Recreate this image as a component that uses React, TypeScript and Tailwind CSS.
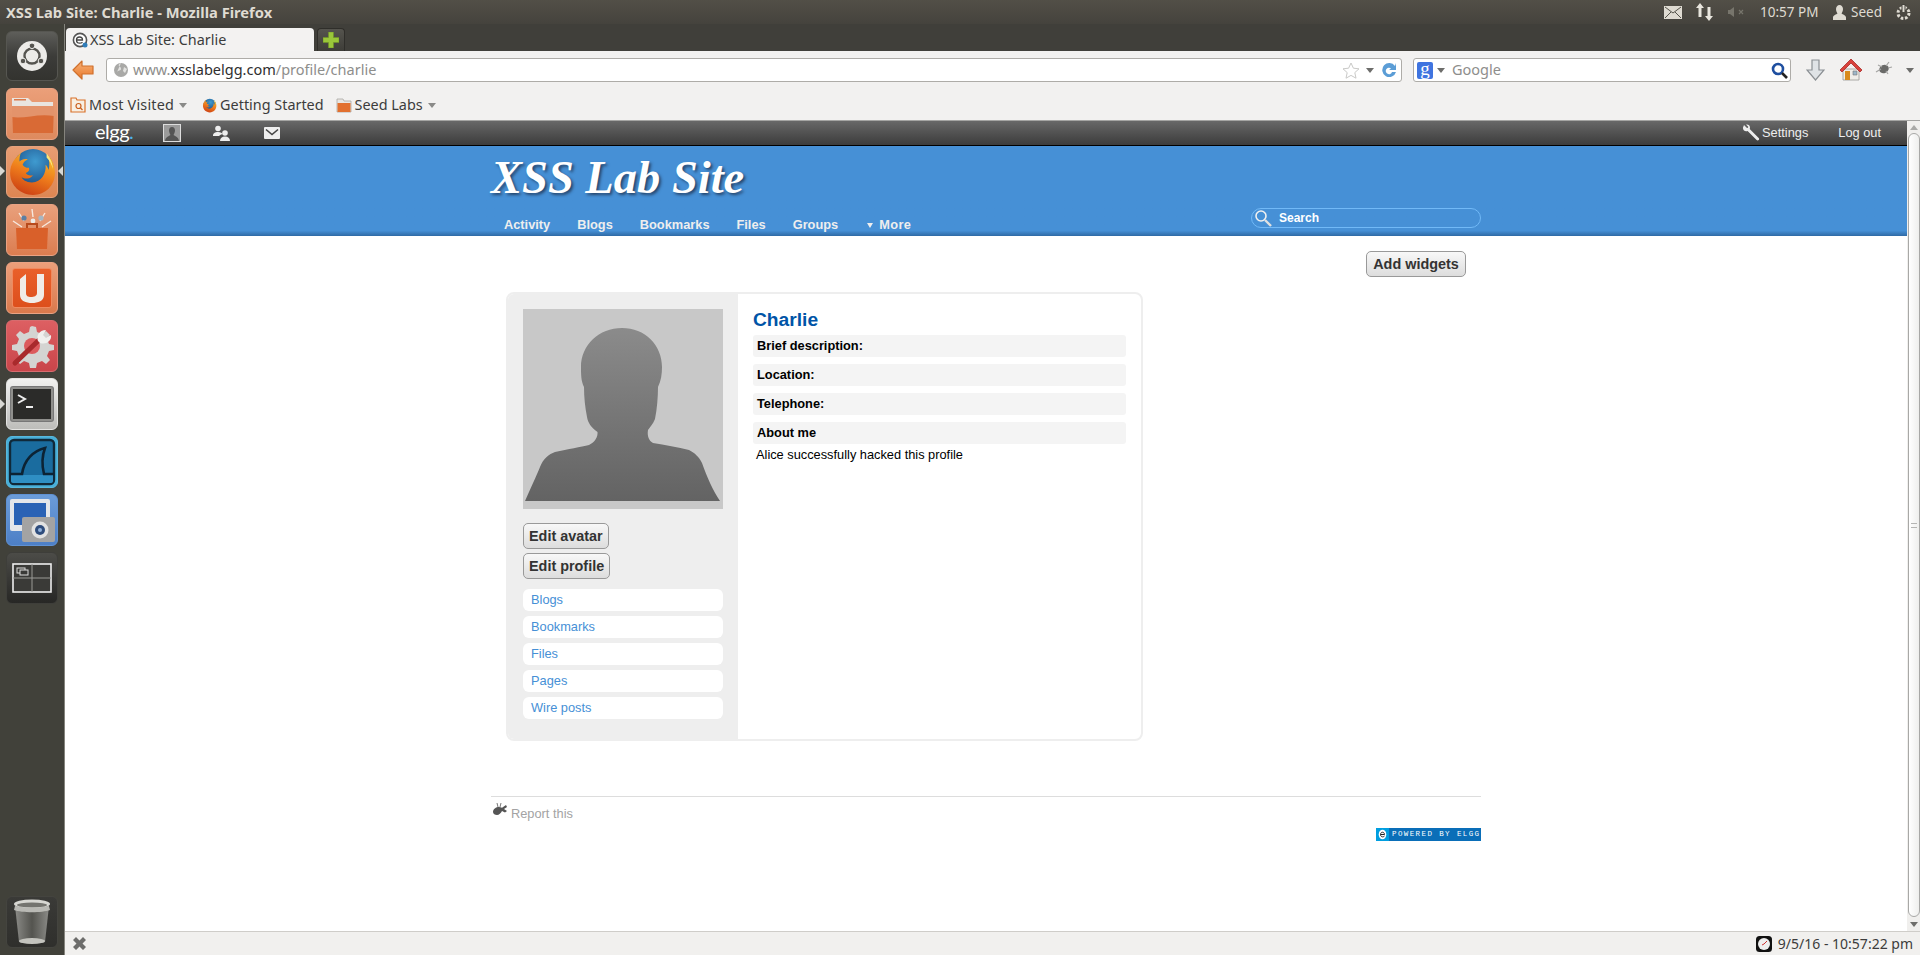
import type { ReactNode } from 'react';

const MENU_ITEMS = ['Blogs', 'Bookmarks', 'Files', 'Pages', 'Wire posts'];
const NAV_ITEMS = ['Activity', 'Blogs', 'Bookmarks', 'Files', 'Groups'];
const PROFILE_ROWS = ['Brief description:', 'Location:', 'Telephone:', 'About me'];

function Caret({ className }: { className: string }) {
  return (
    <svg width="8" height="5" viewBox="0 0 8 5" className={className}>
      <path d="M0 0h8L4 5z" fill="currentColor" />
    </svg>
  );
}

function Tile({ className, children }: { className: string; children: ReactNode }) {
  return (
    <div className={`w-[52px] h-[52px] shrink-0 rounded-[6px] flex items-center justify-center overflow-hidden ${className}`}>
      {children}
    </div>
  );
}

function FirefoxLogo({ size }: { size: number }) {
  return (
    <svg width={size} height={size} viewBox="0 0 48 48">
      <defs>
        <radialGradient id="ffglobe" cx="0.55" cy="0.3" r="0.7">
          <stop offset="0" stopColor="#3f9bd0" />
          <stop offset="1" stopColor="#17457f" />
        </radialGradient>
        <linearGradient id="fffox" x1="0.7" y1="0" x2="0.3" y2="1">
          <stop offset="0" stopColor="#f7c22c" />
          <stop offset="0.5" stopColor="#ef7d1c" />
          <stop offset="1" stopColor="#cb3f14" />
        </linearGradient>
      </defs>
      <circle cx="25" cy="22" r="20" fill="url(#ffglobe)" />
      <path d="M14 5C8 10 3 16 3 25c0 12 10 21 22 21 12 0 21-9 21-21 0-7-3-14-7-17 2 5 2 10 1 14-1-3-2-4-3-5 1 8-4 17-13 17-6 0-9-3-10-5 3 2 8 2 11-2-3 1-6 0-7-2 3-1 4-3 3-5-3 0-5-1-6-3 1-3 3-4 5-5-3-1-6 0-8 2 0-3 0-6 2-10z" fill="url(#fffox)" />
      <path d="M38 6c3 4 6 9 6 15-1-4-3-8-6-11z" fill="#fbe37b" />
    </svg>
  );
}

function Launcher() {
  return (
    <aside className="w-[65px] shrink-0 border-r border-[#85847d] bg-[#41413a] flex flex-col items-center pt-[7px] pr-px relative">
      <Tile className="h-[50px]! bg-linear-to-b from-[#5e5e5a] via-[#3c3c39] to-[#33332f] border border-[#565651] mb-[7px]">
        <svg width="32" height="32" viewBox="0 0 32 32">
          <circle cx="16" cy="16" r="15" fill="#ecebe8" />
          <circle cx="16" cy="16" r="7.5" fill="none" stroke="#55544f" strokeWidth="2.4" />
          <circle cx="16" cy="5.8" r="2.8" fill="#55544f" stroke="#ecebe8" strokeWidth="1" />
          <circle cx="7" cy="21" r="2.8" fill="#55544f" stroke="#ecebe8" strokeWidth="1" />
          <circle cx="25" cy="21" r="2.8" fill="#55544f" stroke="#ecebe8" strokeWidth="1" />
        </svg>
      </Tile>
      <div className="flex flex-col gap-[6px]">
        <Tile className="bg-linear-to-b from-[#eb9f79] to-[#de8a5e] border border-[#e9a283]">
          <svg width="46" height="42" viewBox="0 0 46 42">
            <path d="M3 5h16l4 4h21v7H3z" fill="#e9e5e0" />
            <path d="M5 6h12v1.5H5z" fill="#d9794a" />
            <path d="M3 13h42l-1 27H4z" fill="#d96a35" />
            <path d="M3 13h42v10C30 20 15 26 3 24z" fill="#e3936b" />
          </svg>
        </Tile>
        <Tile className="bg-linear-to-b from-[#e89d72] to-[#dd8653] border border-[#e6a27d]">
          <FirefoxLogo size={50} />
        </Tile>
        <Tile className="bg-linear-to-b from-[#e9a07c] to-[#db7d50] border border-[#e9a283]">
          <svg width="46" height="46" viewBox="0 0 46 46">
            <path d="M23 2l1 8M10 6l5 8M36 6l-5 8M4 14l9 6M42 14l-9 6" stroke="#f6e8de" strokeWidth="1.4" />
            <circle cx="15" cy="11" r="2.6" fill="#5c7fa3" />
            <circle cx="24" cy="14" r="2.4" fill="#ecebe8" />
            <circle cx="32" cy="11" r="2.6" fill="#a7b6c2" />
            <path d="M7 21h32l-1 21H8z" fill="#d9602a" />
            <path d="M18 21v-4h10v4" fill="none" stroke="#b84a1c" strokeWidth="2" />
          </svg>
        </Tile>
        <Tile className="bg-linear-to-b from-[#ec9f7a] to-[#d9794c] border border-[#e9a283]">
          <div className="w-[40px] h-[40px] rounded-[3px] border border-[#f08a5f] bg-linear-to-b from-[#e9602a] to-[#dd4f1c] flex items-center justify-center">
            <svg width="26" height="32" viewBox="0 0 26 32">
              <path d="M1 7l6-5v19c0 3 2 4 5 4s6-1 6-4V2h7v21c0 6-6 8-12 8S1 29 1 23z" fill="#f0ece7" />
            </svg>
          </div>
        </Tile>
        <Tile className="bg-linear-to-b from-[#dd5f62] to-[#c9454a] border border-[#d76c6f]">
          <svg width="46" height="46" viewBox="0 0 46 46">
            <path d="M23 3l4 1 1 5 5 2 4-3 4 4-3 4 2 5 5 1v5l-5 1-2 5 3 4-4 4-4-3-5 2-1 5h-6l-1-5-5-2-4 3-4-4 3-4-2-5-5-1v-5l5-1 2-5-3-4 4-4 4 3 5-2 1-5z" fill="#d4d4d2" />
            <circle cx="23" cy="23" r="8" fill="#dc5a5d" />
            <path d="M6 40L30 17" stroke="#a92a2c" strokeWidth="5" strokeLinecap="round" />
            <path d="M29 18c-2-5 1-11 8-11l-3 5 3 3 5-3c1 6-5 10-11 8z" fill="#f0f0ee" />
          </svg>
        </Tile>
        <Tile className="bg-linear-to-b from-[#f2f2f0] to-[#bdbdba] border border-[#e4e4e2]">
          <div className="w-[42px] h-[34px] bg-[#2b2b29] border-[2px] border-[#8f8f8c] rounded-[2px] shadow-[0_0_0_1px_#777]">
            <svg width="38" height="30" viewBox="0 0 38 30">
              <path d="M5 6l7 4-7 4" fill="none" stroke="#eee" strokeWidth="2" />
              <path d="M13 18h7" stroke="#eee" strokeWidth="2" />
            </svg>
          </div>
        </Tile>
        <Tile className="bg-[#47aed8] border border-[#58b8dd]">
          <svg width="48" height="48" viewBox="0 0 48 48">
            <rect x="2" y="2" width="44" height="44" rx="4" fill="#1a6c9f" stroke="#10293a" strokeWidth="2.4" />
            <path d="M3 37h42v6a2 2 0 0 1-2 2H5a2 2 0 0 1-2-2z" fill="#2f8fc4" />
            <path d="M2 36h12c2-14 11-23 23-26-3 8-3 18-1 26h10" fill="none" stroke="#0c2334" strokeWidth="2.6" />
          </svg>
        </Tile>
        <Tile className="bg-linear-to-b from-[#6b9cd9] to-[#4d7fc6] border border-[#5f91d3]">
          <svg width="50" height="48" viewBox="0 0 50 48">
            <rect x="3" y="3" width="40" height="32" rx="2" fill="#e4e6ea" />
            <rect x="7" y="7" width="32" height="22" fill="#2a62b5" />
            <rect x="15" y="21" width="33" height="25" rx="2" fill="#a3a3a3" />
            <circle cx="33" cy="34" r="8.5" fill="#e2e2e2" />
            <circle cx="33" cy="34" r="5" fill="#2f4d7d" />
            <circle cx="33" cy="34" r="2" fill="#8fb0dc" />
          </svg>
        </Tile>
        <Tile className="bg-linear-to-b from-[#4c4c48] to-[#272725] border border-[#3e3e3a]">
          <svg width="40" height="30" viewBox="0 0 40 30">
            <rect x="1" y="1" width="38" height="28" fill="#3a3a37" stroke="#eee" strokeWidth="1.6" />
            <path d="M20 1v28M1 15h38" stroke="#9a9a96" strokeWidth="1" />
            <rect x="5" y="5" width="8" height="5" fill="none" stroke="#ddd" strokeWidth="1" />
            <rect x="8" y="7" width="8" height="5" fill="#3a3a37" stroke="#ddd" strokeWidth="1" />
          </svg>
        </Tile>
      </div>
      <Tile className="mt-auto mb-[7px] bg-linear-to-b from-[#3a3a37] to-[#2f2f2c] border border-[#44443f]">
        <svg width="40" height="48" viewBox="0 0 40 48">
          <defs>
            <linearGradient id="bin" x1="0" y1="0" x2="1" y2="0">
              <stop offset="0" stopColor="#8b8b87" />
              <stop offset="0.5" stopColor="#54544f" />
              <stop offset="1" stopColor="#8b8b87" />
            </linearGradient>
          </defs>
          <path d="M3 8l4 36c4 2 22 2 26 0l4-36z" fill="url(#bin)" />
          <ellipse cx="20" cy="6" rx="18" ry="4.5" fill="#d7d7d2" />
          <ellipse cx="20" cy="7" rx="15" ry="2.5" fill="#74746f" />
          <path d="M2 12c8 3 28 3 36 0l-1-4c-8 2-26 2-34 0z" fill="#b9b9b4" />
          <ellipse cx="20" cy="43" rx="13" ry="3" fill="#c4c4be" />
        </svg>
      </Tile>
      <span className="absolute left-0 top-[142px] w-0 h-0 border-y-[5px] border-y-transparent border-l-[5px] border-l-[#d8d8d3]" />
      <span className="absolute right-[1px] top-[142px] w-0 h-0 border-y-[5px] border-y-transparent border-r-[5px] border-r-[#d8d8d3]" />
      <span className="absolute left-0 top-[375px] w-0 h-0 border-y-[5px] border-y-transparent border-l-[5px] border-l-[#d8d8d3]" />
    </aside>
  );
}

function TitleBar() {
  return (
    <div className="h-[24px] shrink-0 flex items-center justify-between pl-[6px] pr-[8px] bg-linear-to-b from-[#524f47] to-[#45433d] font-['Noto_Sans',sans-serif] text-[#dfdbd2]">
      <span className="text-[14.7px] font-bold">XSS Lab Site: Charlie - Mozilla Firefox</span>
      <div className="flex items-center text-[13.5px]">
        <svg width="18" height="13" viewBox="0 0 18 13" className="mr-[14px]">
          <rect x="0.5" y="0.5" width="17" height="12" fill="#dfdbd2" stroke="#dfdbd2" />
          <path d="M1 1l8 6 8-6M1 12l6-6M17 12l-6-6" fill="none" stroke="#55534b" strokeWidth="1" />
        </svg>
        <svg width="17" height="18" viewBox="0 0 17 18" className="mr-[15px]">
          <path d="M4 0l4 5H5.5v9h-3V5H0zM13 18l4-5h-2.500V4h-3v9H9z" fill="#e8e5dd" />
        </svg>
        <svg width="17" height="10" viewBox="0 0 17 10" className="mr-[15px]">
          <path d="M0 3h2l4-3v10L2 7H0z" fill="#77756c" />
          <path d="M11 3l4 4M15 3l-4 4" stroke="#77756c" strokeWidth="1.2" />
        </svg>
        <span className="mr-[13px] w-[60px] whitespace-nowrap">10:57 PM</span>
        <svg width="13" height="15" viewBox="0 0 13 15" className="mr-[5px]">
          <path d="M6.5 0c2 0 3.500 1.700 3.500 4 0 2-1 3.500-1.500 4.500 1 1 4.500 1.500 4.500 4V15H0v-2.500c0-2.500 3.500-3 4.500-4C4 7.500 3 6 3 4c0-2.300 1.500-4 3.500-4z" fill="#dfdbd2" />
        </svg>
        <span className="mr-[13px]">Seed</span>
        <svg width="17" height="17" viewBox="0 0 17 17">
          <circle cx="8.5" cy="9" r="5.5" fill="none" stroke="#dfdbd2" strokeWidth="3" strokeDasharray="2.6 1.7" />
          <path d="M8.5 0v8" stroke="#45433d" strokeWidth="4" />
          <path d="M8.5 1v7" stroke="#dfdbd2" strokeWidth="2" />
        </svg>
      </div>
    </div>
  );
}

function TabStrip() {
  return (
    <div className="h-[27px] shrink-0 bg-[#403f3a] flex items-end pl-px gap-[3px] font-['Noto_Sans',sans-serif]">
      <div className="w-[248px] h-[23px] rounded-t-[4px] bg-[#f3f2f1] flex items-center pl-[6px] gap-[2px] text-[14.4px] text-[#3c3c3c]">
        <svg width="16" height="16" viewBox="0 0 16 16">
          <circle cx="8" cy="8" r="6.6" fill="#fff" stroke="#555" strokeWidth="1.6" />
          <path d="M4.500 8h6c0-2-1.200-3-3-3s-3 1.300-3 3 1.300 3.200 3.200 3.200c1 0 2-.3 2.800-1" fill="none" stroke="#444" strokeWidth="1.3" />
          <circle cx="13" cy="13" r="2.5" fill="#2f7cb8" />
        </svg>
        <span className="whitespace-nowrap">XSS Lab Site: Charlie</span>
      </div>
      <div className="w-[28px] h-[23px] rounded-t-[4px] bg-linear-to-b from-[#55544e] to-[#3e3d38] border border-b-0 border-[#2f2e2a] flex items-center justify-center">
        <svg width="16" height="16" viewBox="0 0 16 16">
          <path d="M5.500 0h5v5.500H16v5h-5.500V16h-5v-5.500H0v-5h5.500z" fill="#9ac63a" stroke="#6f9524" strokeWidth="0.6" />
        </svg>
      </div>
    </div>
  );
}

function NavBar() {
  return (
    <div className="h-[46px] shrink-0 bg-[#f2f1f0] flex items-start pt-[7px] pl-[7px] pr-[6px] font-['Noto_Sans',sans-serif]">
      <svg width="22" height="20" viewBox="0 0 22 20" className="mt-[2px] mr-[12px] shrink-0">
        <defs>
          <linearGradient id="backarrow" x1="0" y1="0" x2="0" y2="1">
            <stop offset="0" stopColor="#f7b27a" />
            <stop offset="1" stopColor="#e9782a" />
          </linearGradient>
        </defs>
        <path d="M10 1L1 10l9 9v-5h11V6H10z" fill="url(#backarrow)" stroke="#d0702c" strokeWidth="1.2" strokeLinejoin="round" />
      </svg>
      <div className="flex-1 h-[24px] rounded-[3px] border border-[#aeaca8] bg-white flex items-center pl-[6px] pr-[4px] text-[14.5px] min-w-0">
        <svg width="16" height="16" viewBox="0 0 16 16" className="mr-[4px]">
          <circle cx="8" cy="8" r="7" fill="#a9a9a7" />
          <path d="M8 1c-2 1-3 2-2 3s2 1 2 3-3 1-4 3M11 5l3 2-2 4-2-2z" fill="#e2e2e0" />
        </svg>
        <span className="text-[#8e8e8c]">www.</span>
        <span className="text-[#2e2e2e]">xsslabelgg.com</span>
        <span className="text-[#8e8e8c]">/profile/charlie</span>
        <svg width="18" height="17" viewBox="0 0 18 17" className="ml-auto mr-[6px]">
          <path d="M9 1l2.400 5.200 5.600.6-4.200 3.800 1.200 5.600L9 13.400l-5 2.800 1.200-5.600L1 6.800l5.600-.6z" fill="#fff" stroke="#c9c9c7" />
        </svg>
        <Caret className="text-[#6d6d6b] mr-[7px]" />
        <svg width="16" height="16" viewBox="0 0 16 16">
          <path d="M14 4A7 7 0 1 0 15 10h-4a3.200 3.200 0 1 1-1-3.500L8 8h7V1z" fill="#5b9dd6" />
        </svg>
      </div>
      <div className="w-[378px] ml-[11px] h-[24px] rounded-[3px] border border-[#aeaca8] bg-white flex items-center pl-[3px] pr-[2px] text-[14.5px] shrink-0">
        <span className="w-[16px] h-[17px] rounded-[2px] bg-[#3f74e0] text-white flex items-center justify-center font-['Liberation_Serif',serif] text-[19px] leading-none pb-[3px]">g</span>
        <Caret className="text-[#6d6d6b] ml-[4px] mr-[7px]" />
        <span className="text-[#8e8e8c]">Google</span>
        <svg width="17" height="17" viewBox="0 0 17 17" className="ml-auto">
          <circle cx="7" cy="7" r="5" fill="#fff" stroke="#1f4fa0" strokeWidth="2.6" />
          <path d="M11 11l5 5" stroke="#222" strokeWidth="2.6" />
        </svg>
      </div>
      <div className="flex items-start shrink-0">
        <svg width="19" height="22" viewBox="0 0 19 22" className="ml-[15px] mt-[1px]">
          <path d="M6 1h7v10h5l-8.500 10L1 11h5z" fill="#dfe3e6" stroke="#8a8f93" strokeWidth="1.2" />
        </svg>
        <svg width="24" height="23" viewBox="0 0 24 23" className="ml-[14px]">
          <path d="M4 11h16v11H4z" fill="#efeeea" stroke="#9a9994" strokeWidth="0.8" />
          <path d="M12 1L1 12l2 2 9-9 9 9 2-2z" fill="#d9423c" stroke="#a92a26" strokeWidth="0.8" />
          <path d="M6 13h5v9H6z" fill="#d98b1d" />
          <path d="M14 13h4v4h-4z" fill="#9db7c9" stroke="#777" strokeWidth="0.6" />
        </svg>
        <svg width="18" height="16" viewBox="0 0 18 16" className="ml-[12px] mt-[3px]">
          <ellipse cx="9" cy="8" rx="5" ry="4" fill="#6a6a68" transform="rotate(-25 9 8)" />
          <path d="M1 11l5-3M3 4l4 2M14 1l-3 4M17 6l-4 1M13 13l-2-3" stroke="#a5a5a3" strokeWidth="1.2" />
        </svg>
        <Caret className="text-[#6d6d6b] ml-[13px] mt-[10px]" />
      </div>
    </div>
  );
}

function BookmarksBar() {
  return (
    <div className="h-[23px] shrink-0 bg-[#f2f1f0] flex items-center pl-[5px] pb-[7px] text-[14.4px] text-[#3c3c3c] font-['Noto_Sans',sans-serif]">
      <svg width="16" height="16" viewBox="0 0 16 16" className="mr-[3px]">
        <path d="M1 1h5l1 2h8v12H1z" fill="#f7efe3" stroke="#d9722b" strokeWidth="1.2" />
        <circle cx="8.5" cy="9" r="2.5" fill="none" stroke="#c9601f" strokeWidth="1.2" />
        <path d="M10.500 11l2 2" stroke="#c9601f" strokeWidth="1.2" />
      </svg>
      <span className="tracking-[0.2px]">Most Visited</span>
      <Caret className="text-[#8a8a88] ml-[5px] mr-[15px]" />
      <span className="mr-[3px] flex"><FirefoxLogo size={15} /></span>
      <span>Getting Started</span>
      <svg width="16" height="15" viewBox="0 0 16 15" className="ml-[12px] mr-[3px]">
        <path d="M1 1h6l1 2h7v11H1z" fill="#e9e7e3" stroke="#aaa8a3" strokeWidth="0.8" />
        <path d="M1.500 5h13v9h-13z" fill="#e2702f" />
      </svg>
      <span>Seed Labs</span>
      <Caret className="text-[#8a8a88] ml-[5px]" />
    </div>
  );
}

function ElggBar() {
  return (
    <div className="h-[26px] shrink-0 border-t border-[#a5a5a3] border-b border-b-black bg-linear-to-b from-[#686868] to-[#3c3c3c] flex items-center pl-[30px] pr-[26px] font-['Liberation_Sans',sans-serif] text-[12.8px] text-[#eeeeee]">
      <span className="w-[37px] font-['Lato',sans-serif] text-[20px] leading-none tracking-[-0.5px] text-white -mt-[4px]">
        elgg<span className="text-[#4fb3e8]">.</span>
      </span>
      <div className="ml-[31px] w-[18px] h-[18px] bg-[#9b9b9b] border border-[#dddddd] flex items-end justify-center overflow-hidden">
        <svg width="14" height="15" viewBox="0 0 14 15">
          <path d="M7 1c2 0 3 1.600 3 3.500S9 8 8.500 9c1 1 5 1.500 5.500 6H0c.5-4.500 4.500-5 5.500-6C5 8 4 6.400 4 4.500S5 1 7 1z" fill="#555" />
        </svg>
      </div>
      <svg width="17" height="16" viewBox="0 0 17 16" className="ml-[32px]">
        <circle cx="5" cy="3.5" r="2.8" fill="#eee" />
        <path d="M0 11c0-3 2-4 5-4s4 1 4.500 2c-2 .5-3 1.500-3.300 2z" fill="#eee" />
        <circle cx="12" cy="8" r="2.8" fill="#eee" />
        <path d="M7 16c0-3 2-4.500 5-4.500s5 1.500 5 4.500z" fill="#eee" />
      </svg>
      <svg width="16" height="12" viewBox="0 0 16 12" className="ml-[34px]">
        <rect x="0" y="0" width="16" height="12" rx="1" fill="#eee" />
        <path d="M2 2.500l6 5 6-5" fill="none" stroke="#444" strokeWidth="1.6" />
      </svg>
      <svg width="18" height="18" viewBox="0 0 18 18" className="ml-auto">
        <path d="M2 1l3 3 1-.2.2-1L4 .5C6 0 8 1 8 3.500c0 .6-.1 1-.3 1.400l9 9c.6.6.6 1.500 0 2.100s-1.500.6-2.100 0l-9-9C3.500 8 .5 6.500 1 3.500z" fill="#eee" />
      </svg>
      <span className="ml-[2px]">Settings</span>
      <span className="ml-[30px]">Log out</span>
    </div>
  );
}

function SiteHeader() {
  return (
    <div className="h-[90px] shrink-0 bg-linear-to-b from-[#4690d6] from-[94%] to-[#2f6aa5]">
      <div className="w-[990px] mx-auto font-['Liberation_Sans',sans-serif]">
        <h1 className="pt-[4px] h-[60px] text-[46.5px] leading-[56px] font-bold italic whitespace-nowrap text-white font-['Liberation_Serif',serif] [text-shadow:2px_2px_3px_rgba(30,50,80,0.8)]">
          XSS Lab Site
        </h1>
        <div className="flex justify-between mt-[2px]">
          <nav className="flex gap-[27px] pl-[13px] pt-[9px] text-[12.8px] font-bold text-[#eeeeee] leading-[15px]">
            {NAV_ITEMS.map((item) => (
              <span key={item}>{item}</span>
            ))}
            <span className="flex items-center ml-[2px] tracking-[0.4px]">
              <svg width="6" height="5" viewBox="0 0 6 5" className="mr-[6px] mt-[2px]">
                <path d="M0 0h6L3 5z" fill="#eee" />
              </svg>
              More
            </span>
          </nav>
          <div className="w-[230px] h-[20px] rounded-full border border-[#71b9f7] flex items-center pl-[2px]">
            <svg width="18" height="18" viewBox="0 0 18 18">
              <circle cx="7" cy="7" r="5" fill="none" stroke="#f0f0f0" strokeWidth="1.6" />
              <path d="M11 11l6 6" stroke="#e0e0e0" strokeWidth="2.4" />
            </svg>
            <span className="ml-[7px] text-[12px] font-bold text-white">Search</span>
          </div>
        </div>
      </div>
    </div>
  );
}

function ElggButton({ children, className = '' }: { children: ReactNode; className?: string }) {
  return (
    <button className={`h-[26px] rounded-[5px] border border-[#999999] bg-linear-to-b from-[#f8f8f8] to-[#dddddd] px-[5px] text-[14.4px] font-bold text-[#333333] whitespace-nowrap leading-none ${className}`}>
      {children}
    </button>
  );
}

function Avatar() {
  return (
    <div className="w-[200px] h-[200px] bg-[#c8c8c8]">
      <svg width="200" height="200" viewBox="0 0 200 200">
        <defs>
          <linearGradient id="sil" x1="0" y1="0" x2="0" y2="1">
            <stop offset="0" stopColor="#8b8b8b" />
            <stop offset="1" stopColor="#636363" />
          </linearGradient>
        </defs>
        <path
          d="M2 192C8 178 13 168 17 158C20 150 26 145 32 143C45 140 58 138 66 136C72 133 75 128 74.500 123C68 118 65 114 64 108C62 98 61 88 61 78C58 72 58 65 58 58C58 36 76 19 99 19C122 19 139 36 139 58C139 65 138 72 135 78C135 88 134 100 132 110C130 115 127 118 125 121C124 127 126 132 130 134C142 136 155 138 166 141C172 144 176 148 179 154C184 168 190 182 197 192Z"
          fill="url(#sil)"
        />
      </svg>
    </div>
  );
}

function ProfilePanel() {
  return (
    <div className="w-[637px] h-[449px] ml-[15px] mt-[15px] rounded-[8px] border-2 border-[#eeeeee] flex overflow-hidden">
      <div className="w-[230px] shrink-0 bg-[#eeeeee] pl-[15px] pr-[15px] pt-[15px]">
        <Avatar />
        <div className="mt-[14px] flex flex-col items-start gap-[4px]">
          <ElggButton>Edit avatar</ElggButton>
          <ElggButton>Edit profile</ElggButton>
        </div>
        <ul className="mt-[10px] flex flex-col gap-[5px]">
          {MENU_ITEMS.map((item) => (
            <li key={item} className="h-[22px] rounded-[6px] bg-white pl-[8px] text-[12.8px] leading-[22px] text-[#4690d6]">
              {item}
            </li>
          ))}
        </ul>
      </div>
      <div className="flex-1 pl-[15px] pr-[15px] pt-[14px] text-[12.8px] text-black">
        <h2 className="h-[27px] text-[19.2px] leading-[24px] font-bold text-[#0054a7]">Charlie</h2>
        <div className="flex flex-col gap-[7px]">
          {PROFILE_ROWS.map((row) => (
            <div key={row} className="h-[22px] rounded-[3px] bg-[#f4f4f4] pl-[4px] font-bold leading-[21px]">
              {row}
            </div>
          ))}
        </div>
        <p className="mt-[2px] pl-[3px] leading-[18px]">Alice successfully hacked this profile</p>
      </div>
    </div>
  );
}

function PageBody() {
  return (
    <div className="flex-1 min-w-0 flex flex-col bg-white font-['Liberation_Sans',sans-serif]">
      <ElggBar />
      <SiteHeader />
      <div className="w-[990px] mx-auto">
        <div className="flex justify-end mt-[15px] pr-[15px]">
          <ElggButton className="w-[100px]">Add widgets</ElggButton>
        </div>
        <ProfilePanel />
        <div className="mt-[55px] border-t border-[#dddddd] pt-[6px]">
          <div className="flex items-start text-[12.8px] text-[#a3a3a3]">
            <svg width="17" height="14" viewBox="0 0 17 14" className="mr-[2px] ml-[1px]">
              <path d="M1 9c0-3 3-5 6-5 1 0 2 .3 3 .8L14 2l1 2-3 2 3 2-2 1.500-3-1.500c-1 2-3 4-5 4S1 11 1 9z" fill="#555" />
              <path d="M6 4L5 0M8 4l1-4" stroke="#555" strokeWidth="0.8" />
            </svg>
            <span className="mt-[1px]">Report this</span>
          </div>
          <div className="flex justify-end mt-[5px]">
            <div className="w-[105px] h-[13px] flex bg-[#0a6eb8]">
              <span className="w-[13px] h-[13px] bg-[#009ee0] flex items-center justify-center">
                <svg width="9" height="11" viewBox="0 0 9 11">
                  <ellipse cx="4.5" cy="5.5" rx="3.8" ry="4.8" fill="#fff" />
                  <path d="M2.500 5.500h4c0-3-4-3-4 0 0 2.500 2.500 3 4 1.500" fill="none" stroke="#222" strokeWidth="1" />
                </svg>
              </span>
              <span className="ml-[3px] font-['Liberation_Mono',monospace] text-[7.5px] leading-[13px] tracking-[1.4px] text-white whitespace-nowrap">
                POWERED BY ELGG
              </span>
            </div>
          </div>
        </div>
      </div>
    </div>
  );
}

function Scrollbar() {
  return (
    <div className="w-[13px] shrink-0 bg-[#f0efed] border-t border-[#a5a5a3] flex flex-col items-center">
      <div className="h-[12px] w-full flex items-center justify-center">
        <Caret className="rotate-180 text-[#a9a9a7]" />
      </div>
      <div className="flex-1 w-[12px] rounded-full border border-[#a8a8a6] bg-linear-to-r from-[#ffffff] to-[#efefed] flex items-center justify-center">
        <span className="w-[6px] h-[5px] border-y border-[#b5b5b3]" />
      </div>
      <div className="h-[14px] w-full flex items-center justify-center">
        <Caret className="text-[#6d6d6b]" />
      </div>
    </div>
  );
}

function StatusBar() {
  return (
    <div className="h-[24px] shrink-0 border-t border-[#cfcdc9] bg-[#f1f0ee] flex items-center pl-[8px] pr-[7px] font-['Noto_Sans',sans-serif] text-[14px] text-[#3c3c3c]">
      <svg width="13" height="13" viewBox="0 0 13 13">
        <path d="M3 0l3.500 3.500L10 0l3 3-3.500 3.500L13 10l-3 3-3.500-3.500L3 13l-3-3 3.500-3.500L0 3z" fill="#6d6d6b" />
      </svg>
      <svg width="16" height="16" viewBox="0 0 16 16" className="ml-auto mr-[6px]">
        <rect width="16" height="16" rx="3.5" fill="#111" />
        <circle cx="8" cy="8" r="6" fill="#eee" />
        <path d="M8 8l3-3M8 8l-2 1" stroke="#c33" strokeWidth="1" />
      </svg>
      <span className="whitespace-nowrap">9/5/16 - 10:57:22 pm</span>
    </div>
  );
}

export default function App() {
  return (
    <div className="h-[955px] w-full flex flex-col overflow-hidden bg-[#41413a]">
      <TitleBar />
      <div className="flex-1 min-h-0 flex">
        <Launcher />
        <div className="flex-1 min-w-0 flex flex-col">
          <TabStrip />
          <NavBar />
          <BookmarksBar />
          <div className="flex-1 min-h-0 flex">
            <PageBody />
            <Scrollbar />
          </div>
          <StatusBar />
        </div>
      </div>
    </div>
  );
}
